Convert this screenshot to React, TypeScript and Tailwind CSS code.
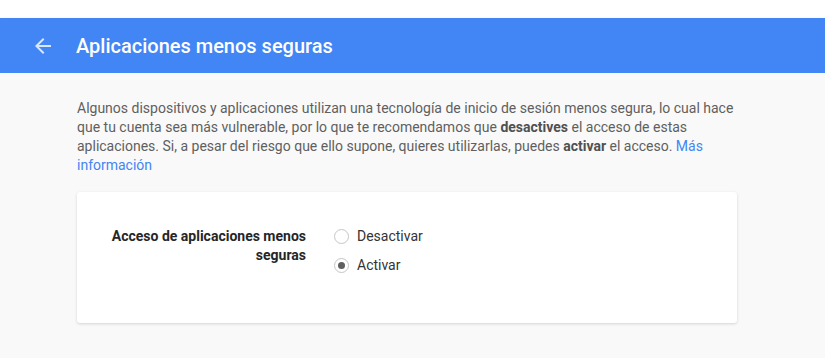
import { useState } from 'react'

function BackArrow() {
  return (
    <svg width="24" height="24" viewBox="0 0 24 24" className="text-white/80">
      <path d="M20 11H7.83l5.59-5.59L12 4l-8 8 8 8 1.41-1.41L7.83 13H20v-2z" fill="currentColor" />
    </svg>
  )
}

function Radio({ checked, label, onClick }: { checked: boolean; label: string; onClick: () => void }) {
  return (
    <button onClick={onClick} className="flex h-[29px] items-center gap-2 text-left">
      <span className="flex h-[15px] w-[15px] items-center justify-center rounded-full border border-[#c6c6c6] bg-white">
        {checked && <span className="h-[7px] w-[7px] rounded-full bg-[#5f5f5f]" />}
      </span>
      <span className="text-[14px] text-[#333]">{label}</span>
    </button>
  )
}

export default function App() {
  const [value, setValue] = useState<'off' | 'on'>('on')

  return (
    <div className="min-h-[358px] bg-white font-['Roboto',sans-serif]">
      <div className="h-[18px] bg-white" />
      <header className="flex h-[55px] items-center bg-[#4285f4] shadow-[0_2px_4px_rgba(0,0,0,0.2)]">
        <div className="ml-[31px] flex w-[45px] items-center">
          <BackArrow />
        </div>
        <h1 className="text-[20px] font-medium text-white">Aplicaciones menos seguras</h1>
      </header>

      <main className="h-[285px] bg-[#f9f9f9] px-[77px] pt-[26px]">
        <p className="max-w-[662px] text-[14px] leading-[19px] text-[#5f5f5f]">
          Algunos dispositivos y aplicaciones utilizan una tecnología de inicio de sesión menos segura, lo cual hace
          que tu cuenta sea más vulnerable, por lo que te recomendamos que{' '}
          <b className="font-bold text-[#505050]">desactives</b> el acceso de estas aplicaciones. Si, a pesar del
          riesgo que ello supone, quieres utilizarlas, puedes <b className="font-bold text-[#505050]">activar</b> el
          acceso. <a className="text-[#4285f4]">Más información</a>
        </p>

        <section className="mt-[17px] flex h-[131px] w-[660px] rounded-[3px] bg-white pl-[29px] pt-[35px] shadow-[0_1px_3px_rgba(0,0,0,0.15)]">
          <div className="w-[200px] text-right text-[14px] font-bold leading-[19px] text-[#262626]">
            Acceso de aplicaciones menos seguras
          </div>
          <div className="ml-[28px] -mt-[5px] flex flex-col">
            <Radio checked={value === 'off'} label="Desactivar" onClick={() => setValue('off')} />
            <Radio checked={value === 'on'} label="Activar" onClick={() => setValue('on')} />
          </div>
        </section>
      </main>
    </div>
  )
}
